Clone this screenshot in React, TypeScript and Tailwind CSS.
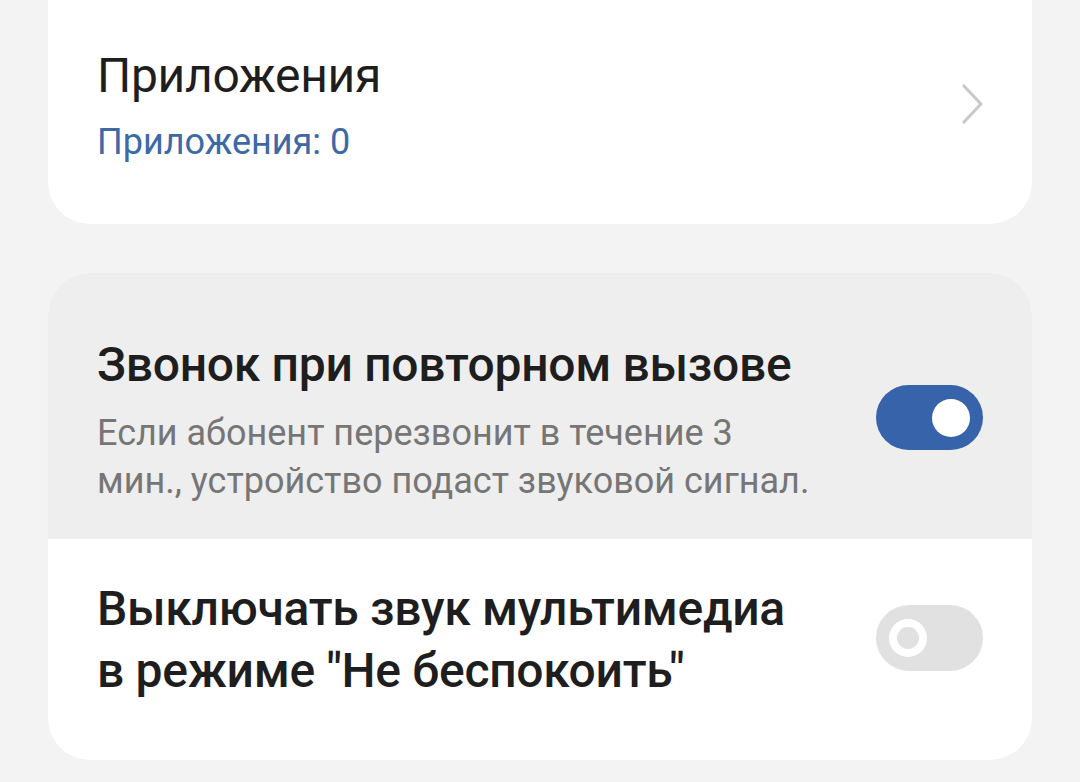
import React from "react";

const font = { fontFamily: "Roboto, 'Noto Sans', sans-serif" };

const Toggle = ({ on }: { on: boolean }) =>
  on ? (
    <div className="flex h-[65px] w-[107px] shrink-0 items-center justify-end rounded-full bg-[#3663a9] pr-[13px]">
      <div className="h-[38px] w-[38px] rounded-full bg-white" />
    </div>
  ) : (
    <div className="flex h-[66px] w-[107px] shrink-0 items-center rounded-full bg-[#e1e1e1] pl-[13px]">
      <div className="flex h-[38px] w-[38px] items-center justify-center rounded-full bg-white">
        <div className="h-[22px] w-[22px] rounded-full bg-[#e1e1e1]" />
      </div>
    </div>
  );

export default function App() {
  return (
    <div className="h-[782px] w-[1080px] overflow-hidden bg-[#f3f3f3]" style={font}>
      {/* apps entry */}
      <div className="mx-[48px] flex h-[224px] items-start justify-between rounded-b-[42px] bg-white pl-[49px] pr-[46px]">
        <div className="flex flex-col pt-[48px]">
          <span className="text-[48px] leading-[56px] font-normal tracking-[-0.3px] text-[#1e1e1e]">
            Приложения
          </span>
          <span className="mt-[14px] text-[36px] leading-[48px] text-[#3d69a6]">
            Приложения: 0
          </span>
        </div>
        <svg width="26" height="42" viewBox="0 0 26 42" className="mt-[83px]">
          <path d="M4 3 L21 21 L4 39" fill="none" stroke="#c9c9c9" strokeWidth="3.2" strokeLinecap="round" strokeLinejoin="round" />
        </svg>
      </div>

      {/* call settings */}
      <div className="mx-[48px] mt-[49px] overflow-hidden rounded-[42px] bg-white">
        <div className="flex h-[266px] items-start justify-between bg-[#eeeeee] pl-[49px] pr-[49px]">
          <div className="flex flex-col pt-[64px]">
            <span className="text-[48px] leading-[56px] font-medium tracking-[-0.3px] text-[#1e1e1e]">
              Звонок при повторном вызове
            </span>
            <span className="mt-[16px] whitespace-nowrap text-[36px] leading-[48px] text-[#767676]">
              Если абонент перезвонит в течение 3
              <br />
              мин., устройство подаст звуковой сигнал.
            </span>
          </div>
          <div className="mt-[112px]">
            <Toggle on />
          </div>
        </div>
        <div className="flex h-[221px] items-start justify-between pl-[49px] pr-[49px]">
          <span className="w-[720px] pt-[39px] text-[48px] leading-[62px] font-medium tracking-[-0.3px] text-[#1e1e1e]">
            Выключать звук мультимедиа в режиме "Не беспокоить"
          </span>
          <div className="mt-[66px]">
            <Toggle on={false} />
          </div>
        </div>
      </div>
    </div>
  );
}
